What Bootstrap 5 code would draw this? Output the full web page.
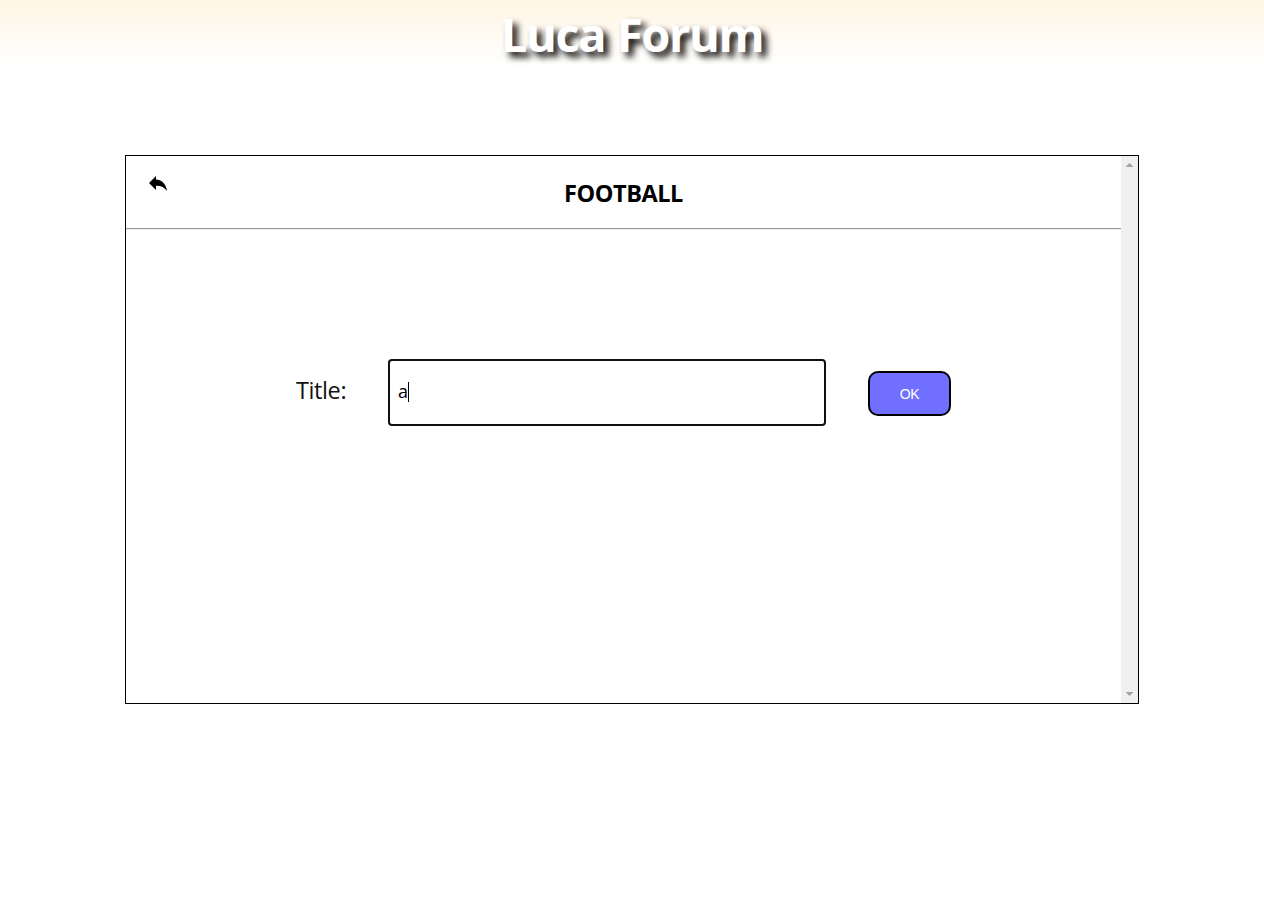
<!DOCTYPE html>
<html lang="en">
<head>
<meta charset="utf-8">
<meta name="viewport" content="width=device-width, initial-scale=1">
<title>Luca Forum</title>
<link href="https://cdn.jsdelivr.net/npm/bootstrap@5.3.0/dist/css/bootstrap.min.css" rel="stylesheet">
<style>
body { font-family: "Open Sans", "Noto Sans", sans-serif; background: #fff; color: #000; }
.site-header { height: 72px; background: linear-gradient(#fff5e4, #fff 66px); }
.site-title { font-size: 47px; line-height: 69px; letter-spacing: -1.4px; word-spacing: 1px; color: #fff; text-shadow: 5px 5px 7px #000; }
.panel { width: 1014px; height: 549px; margin-top: 83px; border: 1px solid #000; }
.panel-head { height: 73px; border-bottom: 1px solid #9a9a9a; box-shadow: 0 1px 0 #eee; }
.back { width: 18px; height: 15px; margin: 20px 0 0 23px; }
.topic { font-size: 23.5px; line-height: 32px; font-weight: 700; letter-spacing: -.45px; padding-top: 21px; margin-left: -41px; }
.title-form { padding: 130px 0 0 170px; }
.title-label { width: 92px; font-size: 23.5px; line-height: 32px; margin-top: -6px; letter-spacing: -.4px; color: #111; }
.title-box { width: 438px; height: 67px; border: 2px solid #101010; border-radius: 4px; font-size: 18px; padding: 0 8px 2px; }
.caret { width: 1px; height: 20px; background: #000; }
.ok-btn { width: 83px; height: 45px; margin-left: 42px; margin-top: 2px; background: #706fff; border: 2px solid #000; border-radius: 10px; color: #fff; font: 14px "Liberation Sans", sans-serif; letter-spacing: -.4px; }
.scroll-track { width: 17px; background: #f0f0f0; padding: 7px 0; }
</style>
</head>
<body>
<header class="site-header d-flex justify-content-center">
  <h1 class="site-title fw-bold my-0"><span>Luca Forum</span></h1>
</header>
<main class="panel mx-auto d-flex">
  <section class="flex-grow-1">
    <div class="panel-head d-flex align-items-start">
      <svg class="back flex-shrink-0" viewBox="0 0 18 15"><path d="M7 0V3.6C13.5 4 17 8.5 18 15C15.2 11.3 12 9.5 7 9.7V14L0 7Z"/></svg>
      <h2 class="topic flex-grow-1 text-center mb-0"><span>FOOTBALL</span></h2>
    </div>
    <form class="title-form d-flex align-items-center">
      <label class="title-label">Title:</label>
      <div class="title-box d-flex align-items-center"><span>a</span><span class="caret"></span></div>
      <button type="button" class="ok-btn p-0">OK</button>
    </form>
  </section>
  <div class="scroll-track d-flex flex-column justify-content-between">
    <svg class="ms-1" width="9" height="4" viewBox="0 0 9 4"><path fill="#a3a3a3" d="M4.5 0L8.5 4H.5Z"/></svg>
    <svg class="ms-1" width="9" height="4" viewBox="0 0 9 4"><path fill="#a3a3a3" d="M.5 0H8.5L4.5 4Z"/></svg>
  </div>
</main>
<script src="https://cdn.jsdelivr.net/npm/bootstrap@5.3.0/dist/js/bootstrap.bundle.min.js"></script>
</body>
</html>
